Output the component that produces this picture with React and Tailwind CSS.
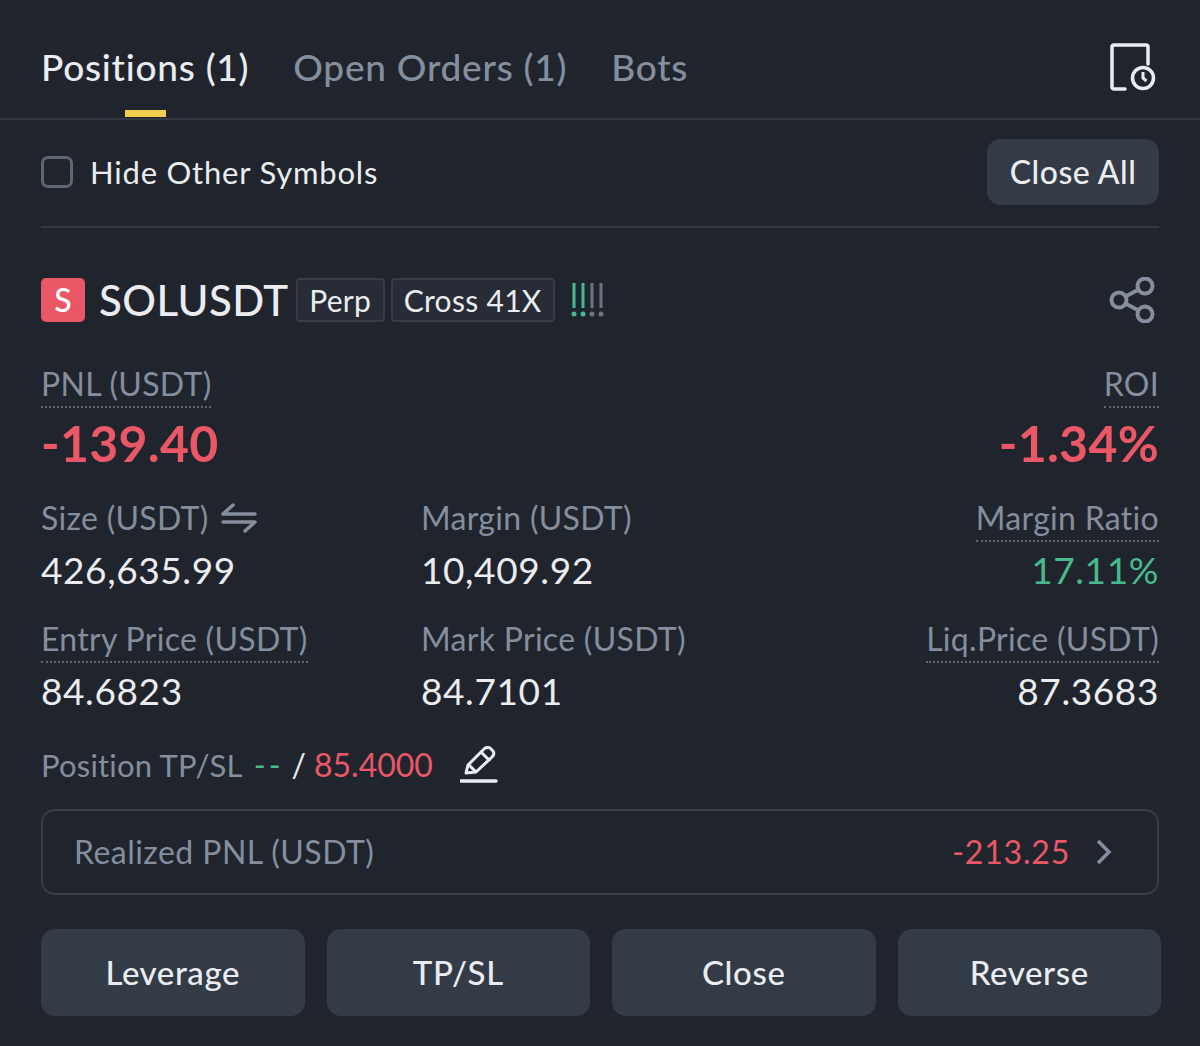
import React from "react";

const font = "font-['Lato','Liberation_Sans',sans-serif]";

function DottedLabel({ children, className = "" }) {
	return (
		<span
			className={`inline-block text-[32px] leading-[44px] tracking-[0.3px] text-[#848e9c] border-b-2 border-dotted border-[#5e6673] ${className}`}
		>
			{children}
		</span>
	);
}

function Plain({ children }) {
	return <span className="inline-block pb-[2px] text-[32px] leading-[44px] tracking-[0.3px] text-[#848e9c]">{children}</span>;
}

function Stat({ label, value, align = "left", valueClass = "text-[#eaecef]" }) {
	return (
		<div className={`flex flex-col ${align === "right" ? "items-end" : "items-start"}`}>
			{label}
			<span className={`text-[37px] leading-[44px] mt-[6px] tracking-[0.6px] ${valueClass}`}>{value}</span>
		</div>
	);
}

function ActionButton({ children }) {
	return (
		<button className="h-[87px] flex-1 rounded-[14px] bg-[#333b47] text-[33px] tracking-[0.6px] font-medium text-[#eaecef]">
			{children}
		</button>
	);
}

export default function App() {
	return (
		<main className={`w-[1200px] h-[1046px] overflow-hidden bg-[#20242d] ${font}`}>
			{/* tabs */}
			<header className="h-[120px] border-b-2 border-[#333942] px-[41px] flex items-start justify-between relative">
				<nav className="flex gap-[44px] pt-[43px] text-[37px] leading-[48px] tracking-[0.75px]">
					<span className="text-[#eaecef] font-medium relative">
						Positions (1)
						<span className="absolute left-[84px] top-[67px] h-[7px] w-[41px] bg-[#f0cf4e]" />
					</span>
					<span className="text-[#848e9c] font-medium">Open Orders (1)</span>
					<span className="text-[#848e9c] font-medium">Bots</span>
				</nav>
				<svg className="mt-[42px] mr-[3px]" width="46" height="50" viewBox="0 0 46 50" fill="none" stroke="#eaecef" strokeWidth="3.5">
					<path d="M15 47H4a2 2 0 0 1-2-2V5a2 2 0 0 1 2-2h32a2 2 0 0 1 2 2v17" strokeLinecap="round" />
					<circle cx="33" cy="36" r="10.5" />
					<path d="M33 30v6l3.5 3" strokeWidth="3" />
				</svg>
			</header>

			<div className="px-[41px]">
				{/* filter row */}
				<div className="h-[108px] border-b-2 border-[#333942] flex items-center justify-between pb-[2px]">
					<label className="flex items-center gap-[17px]">
						<span className="w-[32px] h-[32px] rounded-[7px] border-[3px] border-[#5e6673]" />
						<span className="text-[31px] text-[#eaecef] tracking-[0.8px]">Hide Other Symbols</span>
					</label>
					<button className="w-[172px] h-[66px] rounded-[14px] bg-[#333b47] text-[32px] tracking-[0.5px] font-medium text-[#eaecef]">
						Close All
					</button>
				</div>

				{/* symbol row */}
				<div className="flex items-center justify-between mt-[49px] h-[46px]">
					<div className="flex items-center">
						<span className="w-[44px] h-[44px] rounded-[5px] bg-[#ea5766] flex items-center justify-center text-[32px] font-medium text-white">
							S
						</span>
						<span className="ml-[14px] text-[42px] tracking-[0.45px] font-medium text-[#eaecef]">SOLUSDT</span>
						<span className="ml-[7px] h-[44px] w-[89px] rounded-[4px] border-2 border-[#363d49] bg-[#272c36] flex items-center justify-center text-[30px] tracking-[0.3px] text-[#eaecef]">
							Perp
						</span>
						<span className="ml-[6px] h-[44px] w-[164px] rounded-[4px] border-2 border-[#363d49] bg-[#272c36] flex items-center justify-center text-[30px] tracking-[0.3px] text-[#eaecef]">
							Cross 41X
						</span>
						<svg className="ml-[16px]" width="36" height="36" viewBox="0 0 36 36">
							<g strokeWidth="3">
								<path d="M3 1v25" stroke="#48b98c" />
								<path d="M12 1v25" stroke="#48b98c" />
								<path d="M21 1v25" stroke="#6d7480" />
								<path d="M30 1v25" stroke="#6d7480" />
							</g>
							<circle cx="3" cy="32" r="2.5" fill="#48b98c" />
							<circle cx="12" cy="32" r="2.5" fill="#48b98c" />
							<circle cx="21" cy="32" r="2.5" fill="#6d7480" />
							<circle cx="30" cy="32" r="2.5" fill="#6d7480" />
						</svg>
					</div>
					<svg width="46" height="46" viewBox="0 0 46 46" fill="none" stroke="#848e9c" strokeWidth="4" className="mr-[4px]">
						<circle cx="10" cy="23" r="7.5" />
						<circle cx="36" cy="9" r="7.5" />
						<circle cx="36" cy="37" r="7.5" />
						<path d="M16.5 19.5 29.5 12.5M16.5 26.5 29.5 33.5" />
					</svg>
				</div>

				{/* pnl */}
				<div className="flex justify-between mt-[39px]">
					<div className="flex flex-col items-start">
						<DottedLabel>PNL (USDT)</DottedLabel>
						<span className="text-[50px] leading-[56px] mt-[7px] tracking-[0.3px] font-bold text-[#ea5766]">-139.40</span>
					</div>
					<div className="flex flex-col items-end">
						<DottedLabel>ROI</DottedLabel>
						<span className="text-[50px] leading-[56px] mt-[7px] tracking-[0.3px] font-bold text-[#ea5766]">-1.34%</span>
					</div>
				</div>

				{/* stats */}
				<div className="grid grid-cols-[380px_1fr_auto] mt-[25px] gap-y-[25px]">
					<Stat
						label={
							<span className="flex items-start gap-[12px]">
								<Plain>Size (USDT)</Plain>
								<svg className="mt-[6px]" width="36" height="32" viewBox="0 0 36 32" fill="none" stroke="#848e9c" strokeWidth="3.5" strokeLinecap="round" strokeLinejoin="round">
									<path d="M12 3 2 12h32" />
									<path d="M24 29l10-9H2" />
								</svg>
							</span>
						}
						value="426,635.99"
					/>
					<Stat label={<Plain>Margin (USDT)</Plain>} value="10,409.92" />
					<Stat label={<DottedLabel>Margin Ratio</DottedLabel>} value="17.11%" align="right" valueClass="text-[#48b98c]" />
					<Stat label={<DottedLabel>Entry Price (USDT)</DottedLabel>} value="84.6823" />
					<Stat label={<Plain>Mark Price (USDT)</Plain>} value="84.7101" />
					<Stat label={<DottedLabel>Liq.Price (USDT)</DottedLabel>} value="87.3683" align="right" />
				</div>

				{/* tp/sl */}
				<div className="flex items-center mt-[30px] h-[44px] text-[32px]">
					<span className="text-[#848e9c] text-[31px] tracking-[0.2px]">Position TP/SL</span>
					<span className="ml-[11px] text-[#48b98c] tracking-[3px]">--</span>
					<span className="ml-[8px] text-[#eaecef]">/</span>
					<span className="ml-[8px] text-[#ea5766]">85.4000</span>
					<svg className="ml-[27px]" width="38" height="38" viewBox="0 0 38 38" fill="none" stroke="#eaecef" strokeWidth="3" strokeLinejoin="round">
						<path d="M6 27l2-8L24 3c2-2 4-2 6-1l3 3c1.500 2 1 4-1 6L16 26l-10 1z" />
						<path d="M21 6l9 9M9 19l7 7" />
						<path d="M1 35h35" strokeLinecap="round" strokeWidth="3.500" />
					</svg>
				</div>

				{/* realized */}
				<div className="mt-[22px] h-[86px] rounded-[14px] border-2 border-[#363d49] flex items-center justify-between pl-[31px] pr-[44px]">
					<span className="text-[32px] tracking-[0.45px] text-[#848e9c]">Realized PNL (USDT)</span>
					<span className="flex items-center gap-[25px]">
						<span className="text-[32px] tracking-[0.8px] text-[#ea5766]">-213.25</span>
						<svg width="18" height="28" viewBox="0 0 18 28" fill="none" stroke="#848e9c" strokeWidth="3.500">
							<path d="M3 3l11 11L3 25" />
						</svg>
					</span>
				</div>

				{/* actions */}
				<div className="flex gap-[22px] mt-[34px] w-[1120px]">
					<ActionButton>Leverage</ActionButton>
					<ActionButton>TP/SL</ActionButton>
					<ActionButton>Close</ActionButton>
					<ActionButton>Reverse</ActionButton>
				</div>
			</div>
		</main>
	);
}
